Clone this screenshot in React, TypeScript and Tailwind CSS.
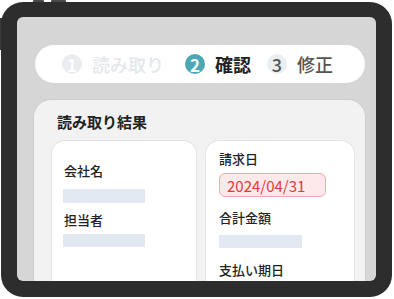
import React from "react";

const jp = { fontFamily: '"Noto Sans CJK JP", "Noto Sans", sans-serif' };

export default function App() {
  return (
    <div className="relative w-[394px] h-[299px] bg-white overflow-hidden" style={jp}>
      {/* side buttons */}
      <div className="absolute left-[33px] top-0 w-[11px] h-[4px] bg-[#4a4a4a] rounded-t-[1px]" />
      <div className="absolute left-[51px] top-0 w-[15px] h-[4px] bg-[#4a4a4a] rounded-t-[1px]" />
      <div className="absolute left-0 top-[18px] w-[3px] h-[32px] bg-[#3a3a3a]" />
      <div className="ml-[1px] mt-[2px] w-[391px] h-[295px] rounded-[22px] bg-[#2d2d2d] pt-[15px] px-[16px] pb-[16px] relative">
        <div className="w-full h-full bg-[#d6d6d6] rounded-[6px] overflow-hidden flex flex-col">
          {/* step pill */}
          <div className="ml-[18px] mt-[28px] w-[330px] h-[38px] shrink-0 rounded-full bg-white flex items-center pl-[27px]">
            <div className="w-[20px] h-[20px] rounded-full bg-[#e8edf0] text-white text-[17px] font-bold flex items-center justify-center leading-none">1</div>
            <span className="ml-[10px] text-[18px] font-medium text-[#e3e8ec] leading-none">読み取り</span>
            <div className="ml-[21px] w-[20px] h-[20px] rounded-full bg-[#4aa8b5] text-white text-[17px] font-bold flex items-center justify-center leading-none">2</div>
            <span className="ml-[10px] text-[18px] font-bold text-[#222] leading-none">確認</span>
            <div className="ml-[16px] w-[20px] h-[20px] rounded-full bg-[#eceff1] text-[#555] text-[18px] font-medium flex items-center justify-center leading-none">3</div>
            <span className="ml-[10px] text-[18px] font-medium text-[#555] leading-none">修正</span>
          </div>
          {/* result card */}
          <div className="ml-[16px] mt-[16px] w-[333px] grow rounded-t-[18px] bg-[#f2f2f2] border border-[#cdcdcd] border-b-0">
            <div className="mt-[11px] pl-[23px] h-[22px] text-[15px] font-bold text-[#222] leading-[22px]">読み取り結果</div>
            <div className="mt-[7px] pl-[17px] flex gap-[8px] h-[200px]">
              <div className="w-[146px] h-full rounded-t-[14px] bg-white border border-[#e4e4e4] border-b-0 pl-[11px] pt-[20px]">
                <div className="pl-[1px] text-[13px] font-medium text-[#222] leading-[20px]">会社名</div>
                <div className="mt-[8px] w-[82px] h-[14px] bg-[#e2e8f0]" />
                <div className="mt-[7px] pl-[1px] text-[13px] font-medium text-[#222] leading-[20px]">担当者</div>
                <div className="mt-[4px] w-[82px] h-[13px] bg-[#e2e8f0]" />
              </div>
              <div className="w-[150px] h-full rounded-t-[14px] bg-white border border-[#e4e4e4] border-b-0 pl-[13px] pt-[8px]">
                <div className="text-[13px] font-medium text-[#222] leading-[20px]">請求日</div>
                <div className="mt-[4px] w-[107px] h-[24px] rounded-[6px] bg-[#fde8ea] border border-[#f3a6ad] flex items-center pl-[7px] text-[15px] text-[#e53935] leading-none">2024/04/31</div>
                <div className="mt-[11px] text-[13px] font-medium text-[#222] leading-[20px]">合計金額</div>
                <div className="mt-[7px] w-[83px] h-[13px] bg-[#e2e8f0]" />
                <div className="mt-[12px] text-[13px] font-medium text-[#222] leading-[20px]">支払い期日</div>
              </div>
            </div>
          </div>
        </div>
      </div>
    </div>
  );
}
